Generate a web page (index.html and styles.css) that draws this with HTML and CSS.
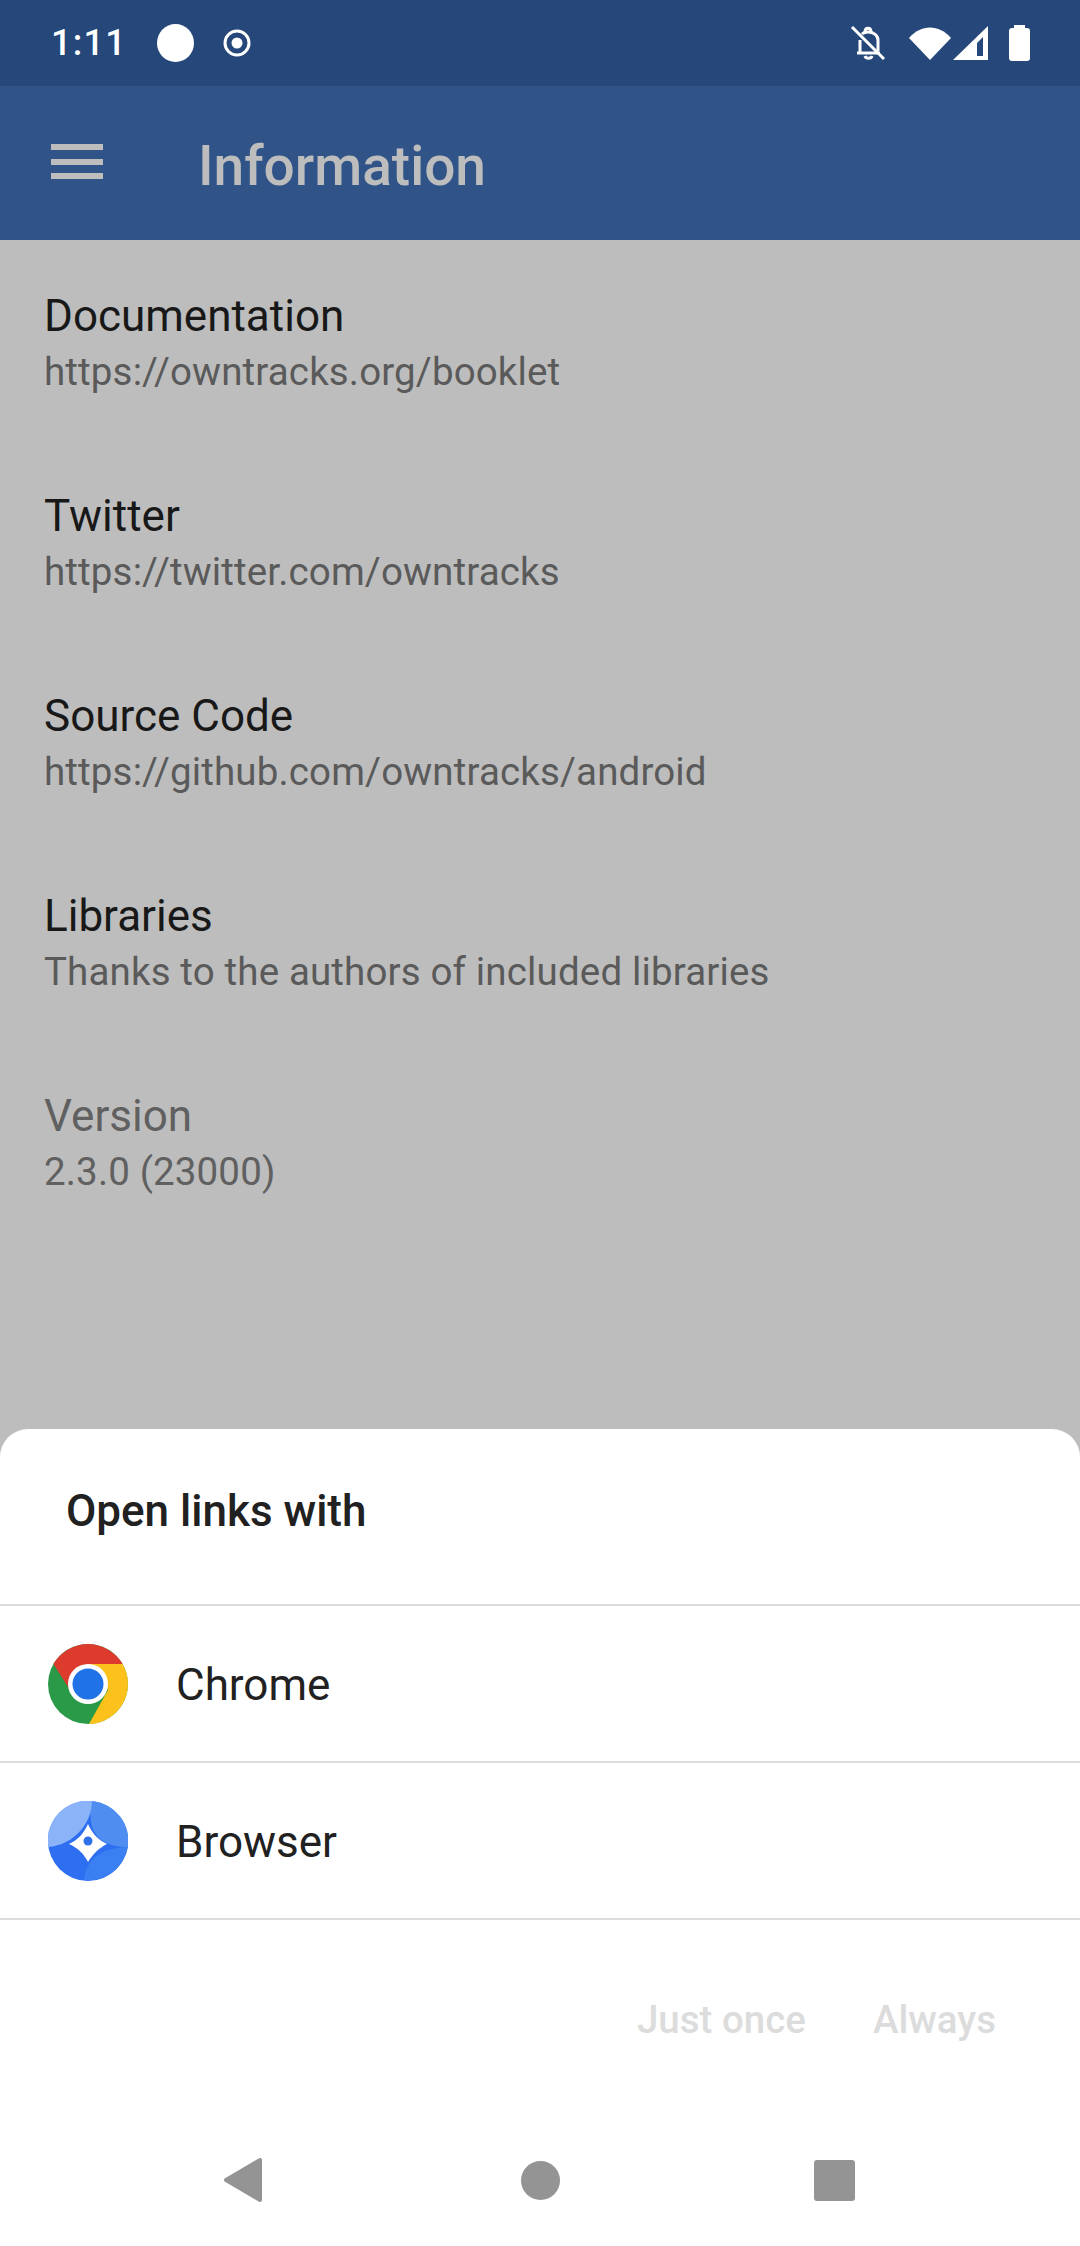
FILE: index.html
```html
<!DOCTYPE html>
<html lang="en">
  <head>
    <meta charset="UTF-8" />
    <meta name="viewport" content="width=device-width, initial-scale=1.0" />
    <title>Information</title>
    <link rel="stylesheet" href="styles.css">
  </head>
  <body>
    <div class="screen">
      <div class="status-bar">
        <span class="clock">1:11</span>
        <span class="dot"></span>
        <svg class="target" width="28" height="28" viewBox="0 0 28 28">
          <circle cx="14" cy="14" r="12" fill="none" stroke="#fff" stroke-width="3" />
          <circle cx="14" cy="14" r="5.5" fill="#fff" />
        </svg>
        <div class="status-icons">
          <svg class="bell" width="36" height="36" viewBox="0 0 36 36" fill="none" stroke="#fff" stroke-width="3">
            <path d="M7 28H30M10 28V15M28 26V15C28 10 23 7 18 7C15 7 13 8 12 9" />
            <path d="M15 7C15 2 21 2 21 7M15 31C16 34 21 34 22 31" />
            <path d="M2 2L34 34" />
          </svg>
          <svg class="wifi" width="42" height="33" viewBox="0 0 42 33">
            <path d="M0 11C12 -3 30 -3 42 11L21 33z" fill="#fff" />
          </svg>
          <svg class="signal" width="36" height="35" viewBox="0 0 36 35">
            <path fill-rule="evenodd" d="M0 34L35 0V34zM24 30H30V11L24 17z" fill="#fff" />
          </svg>
          <span class="battery"></span>
        </div>
      </div>

      <header class="toolbar">
        <span class="menu-icon"><i></i><i></i><i></i></span>
        <h1>Information</h1>
      </header>

      <ul class="info-list">
        <li class="info-item">
          <div class="info-title">Documentation</div>
          <div class="info-sub">https://owntracks.org/booklet</div>
        </li>
        <li class="info-item">
          <div class="info-title">Twitter</div>
          <div class="info-sub">https://twitter.com/owntracks</div>
        </li>
        <li class="info-item">
          <div class="info-title">Source Code</div>
          <div class="info-sub">https://github.com/owntracks/android</div>
        </li>
        <li class="info-item">
          <div class="info-title">Libraries</div>
          <div class="info-sub">Thanks to the authors of included libraries</div>
        </li>
        <li class="info-item disabled">
          <div class="info-title">Version</div>
          <div class="info-sub">2.3.0 (23000)</div>
        </li>
      </ul>

      <section class="sheet">
        <h2>Open links with</h2>
        <div class="app-row">
          <svg class="app-icon" viewBox="0 0 80 80">
            <circle cx="40" cy="40" r="40" fill="#2a9a48" />
            <path d="M5.400 20A40 40 0 0 1 74.600 20H40L22 46z" fill="#dc3b2d" />
            <path d="M74.600 20A40 40 0 0 1 41 80L60 46L40 20z" fill="#fcc21b" />
            <circle cx="40" cy="40" r="20" fill="#fff" />
            <circle cx="40" cy="40" r="15.500" fill="#1f73e6" />
          </svg>
          <span>Chrome</span>
        </div>
        <div class="app-row">
          <svg class="app-icon" viewBox="0 0 80 80">
            <circle cx="40" cy="40" r="40" fill="#2d6ff0" />
            <path d="M36 79C38 62 48 47 80 46A40 40 0 0 1 36 79z" fill="#3b80f2" />
            <path d="M44 0A40 40 0 0 1 80 46C62 46 36 40 44 0z" fill="#4f8df0" />
            <path d="M0 46A40 40 0 0 1 44 0C44 22 26 44 0 46z" fill="#8ab3f8" />
            <path d="M40 23C44 32 50 39 59 43C51 47 45 53 40 61C36 53 30 47 21 43C30 39 36 32 40 23z" fill="#fff" />
            <circle cx="40" cy="40" r="4.500" fill="#2f6fe8" />
          </svg>
          <span>Browser</span>
        </div>
        <div class="sheet-actions">
          <button class="action">Just once</button>
          <button class="action">Always</button>
        </div>
        <nav class="nav-bar">
          <svg width="42" height="46" viewBox="0 0 42 46">
            <path d="M37 3V43L3 23z" fill="#949494" stroke="#949494" stroke-width="4" stroke-linejoin="round" />
          </svg>
          <span class="nav-home"></span>
          <span class="nav-recent"></span>
        </nav>
      </section>
    </div>
  </body>
</html>
```

FILE: styles.css
```css
* {
  padding: 0;
  margin: 0;
  box-sizing: border-box;
}
body {
  font-family: Roboto, "Liberation Sans", sans-serif;
  background: #bdbdbd;
}
.screen {
  width: 1080px;
  height: 2246px;
  display: flex;
  flex-direction: column;
  overflow: hidden;
}
.status-bar {
  height: 86px;
  background: #25477a;
  display: flex;
  align-items: center;
  padding: 0 50px 0 51px;
  color: #fff;
}
.clock {
  font-size: 36px;
  font-weight: 500;
  letter-spacing: 1.300px;
  width: 100px;
}
.dot {
  width: 37px;
  height: 38px;
  border-radius: 50%;
  background: #fff;
  margin-left: 6px;
}
.target {
  margin-left: 29px;
}
.status-icons {
  margin-left: auto;
  display: flex;
  align-items: center;
}
.wifi {
  margin-left: 23px;
}
.signal {
  margin-left: 2px;
}
.battery {
  width: 21px;
  height: 33px;
  margin-left: 20px;
  margin-top: 2px;
  background: #fff;
  border-radius: 3px;
  position: relative;
}
.battery::before {
  content: "";
  position: absolute;
  top: -3px;
  left: 5px;
  width: 11px;
  height: 4px;
  background: #fff;
}
.toolbar {
  height: 154px;
  background: #305488;
  display: flex;
  align-items: center;
  padding-left: 51px;
}
.menu-icon {
  width: 52px;
  display: flex;
  flex-direction: column;
  gap: 8.500px;
  margin-top: -3px;
}
.menu-icon i {
  display: block;
  height: 6px;
  background: #bdbdbd;
}
.toolbar h1 {
  margin-left: 95px;
  margin-top: 6px;
  font-size: 55px;
  font-weight: 500;
  color: #bdbdbd;
}
.info-list {
  list-style: none;
  flex: 1;
}
.info-item {
  height: 200px;
  padding: 51px 0 0 44px;
}
.info-title {
  font-size: 44px;
  line-height: 50px;
  color: #181818;
}
.info-sub {
  font-size: 38.500px;
  letter-spacing: 0.150px;
  line-height: 50px;
  margin-top: 6px;
  color: #5a5a5a;
}
.disabled .info-title,
.disabled .info-sub {
  color: #606060;
}
.sheet {
  background: #fff;
  border-radius: 28px 28px 0 0;
  height: 817px;
  flex-shrink: 0;
  display: flex;
  flex-direction: column;
}
.sheet h2 {
  height: 177px;
  border-bottom: 2px solid #dcdcdc;
  padding: 57px 0 0 66px;
  font-size: 44px;
  line-height: 50px;
  font-weight: 500;
  color: #212121;
}
.app-row {
  height: 157px;
  border-bottom: 2px solid #dcdcdc;
  display: flex;
  align-items: center;
  padding-left: 48px;
  font-size: 44px;
  color: #212121;
}
.app-row span {
  margin-top: 3px;
}
.app-icon {
  width: 80px;
  height: 80px;
  margin-right: 48px;
}
.sheet-actions {
  display: flex;
  justify-content: flex-end;
  gap: 67px;
  padding: 75px 84px 0 0;
}
.action {
  border: none;
  background: none;
  font-family: inherit;
  font-size: 38.500px;
  font-weight: 500;
  line-height: 50px;
  color: #dcdcdc;
}
.nav-bar {
  margin-top: auto;
  margin-bottom: 20px;
  height: 92px;
  display: flex;
  align-items: center;
  padding-left: 223px;
}
.nav-home {
  width: 39px;
  height: 39px;
  margin-left: 256px;
  border-radius: 50%;
  background: #949494;
}
.nav-recent {
  width: 41px;
  height: 41px;
  margin-left: 254px;
  border-radius: 3px;
  background: #949494;
}
```
